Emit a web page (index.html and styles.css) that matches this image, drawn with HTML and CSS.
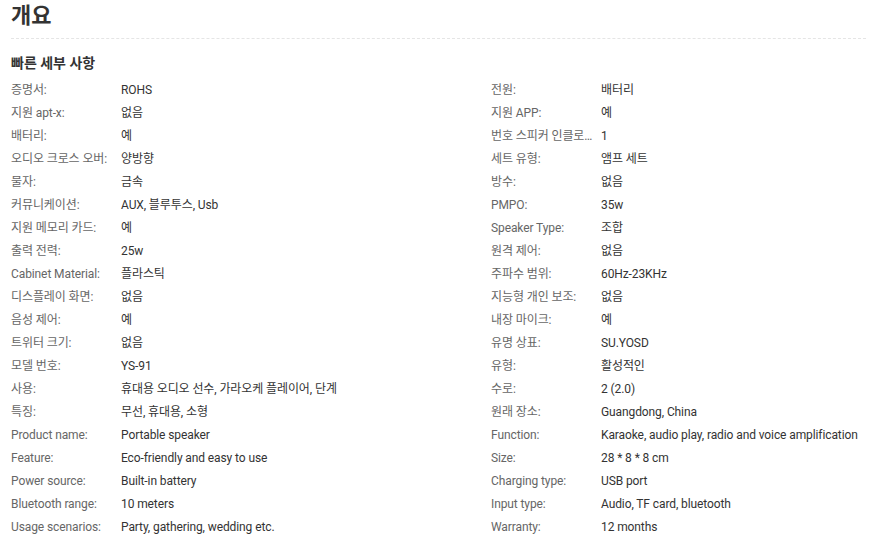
FILE: index.html
```html
<!DOCTYPE html>
<html lang="ko">
	<head>
		<meta charset="UTF-8">
		<title>개요</title>
		<link rel="stylesheet" href="styles.css">
	</head>
	<body>
		<div class="overview">
			<h1 class="overview-title">개요</h1>
			<h2 class="sub-title">빠른 세부 사항</h2>
			<div class="attr-list">
				<div class="attr"><span class="attr-name">증명서:</span><span class="attr-val">ROHS</span></div>
				<div class="attr"><span class="attr-name">전원:</span><span class="attr-val">배터리</span></div>
				<div class="attr"><span class="attr-name">지원 apt-x:</span><span class="attr-val">없음</span></div>
				<div class="attr"><span class="attr-name">지원 APP:</span><span class="attr-val">예</span></div>
				<div class="attr"><span class="attr-name">배터리:</span><span class="attr-val">예</span></div>
				<div class="attr"><span class="attr-name">번호 스피커 인클로저:</span><span class="attr-val">1</span></div>
				<div class="attr"><span class="attr-name">오디오 크로스 오버:</span><span class="attr-val">양방향</span></div>
				<div class="attr"><span class="attr-name">세트 유형:</span><span class="attr-val">앰프 세트</span></div>
				<div class="attr"><span class="attr-name">물자:</span><span class="attr-val">금속</span></div>
				<div class="attr"><span class="attr-name">방수:</span><span class="attr-val">없음</span></div>
				<div class="attr"><span class="attr-name">커뮤니케이션:</span><span class="attr-val">AUX, 블루투스, Usb</span></div>
				<div class="attr"><span class="attr-name">PMPO:</span><span class="attr-val">35w</span></div>
				<div class="attr"><span class="attr-name">지원 메모리 카드:</span><span class="attr-val">예</span></div>
				<div class="attr"><span class="attr-name">Speaker Type:</span><span class="attr-val">조합</span></div>
				<div class="attr"><span class="attr-name">출력 전력:</span><span class="attr-val">25w</span></div>
				<div class="attr"><span class="attr-name">원격 제어:</span><span class="attr-val">없음</span></div>
				<div class="attr"><span class="attr-name">Cabinet Material:</span><span class="attr-val">플라스틱</span></div>
				<div class="attr"><span class="attr-name">주파수 범위:</span><span class="attr-val">60Hz-23KHz</span></div>
				<div class="attr"><span class="attr-name">디스플레이 화면:</span><span class="attr-val">없음</span></div>
				<div class="attr"><span class="attr-name">지능형 개인 보조:</span><span class="attr-val">없음</span></div>
				<div class="attr"><span class="attr-name">음성 제어:</span><span class="attr-val">예</span></div>
				<div class="attr"><span class="attr-name">내장 마이크:</span><span class="attr-val">예</span></div>
				<div class="attr"><span class="attr-name">트위터 크기:</span><span class="attr-val">없음</span></div>
				<div class="attr"><span class="attr-name">유명 상표:</span><span class="attr-val">SU.YOSD</span></div>
				<div class="attr"><span class="attr-name">모델 번호:</span><span class="attr-val">YS-91</span></div>
				<div class="attr"><span class="attr-name">유형:</span><span class="attr-val">활성적인</span></div>
				<div class="attr"><span class="attr-name">사용:</span><span class="attr-val">휴대용 오디오 선수, 가라오케 플레이어, 단계</span></div>
				<div class="attr"><span class="attr-name">수로:</span><span class="attr-val">2 (2.0)</span></div>
				<div class="attr"><span class="attr-name">특징:</span><span class="attr-val">무선, 휴대용, 소형</span></div>
				<div class="attr"><span class="attr-name">원래 장소:</span><span class="attr-val">Guangdong, China</span></div>
				<div class="attr"><span class="attr-name">Product name:</span><span class="attr-val">Portable speaker</span></div>
				<div class="attr"><span class="attr-name">Function:</span><span class="attr-val">Karaoke, audio play, radio and voice amplification</span></div>
				<div class="attr"><span class="attr-name">Feature:</span><span class="attr-val">Eco-friendly and easy to use</span></div>
				<div class="attr"><span class="attr-name">Size:</span><span class="attr-val">28 * 8 * 8 cm</span></div>
				<div class="attr"><span class="attr-name">Power source:</span><span class="attr-val">Built-in battery</span></div>
				<div class="attr"><span class="attr-name">Charging type:</span><span class="attr-val">USB port</span></div>
				<div class="attr"><span class="attr-name">Bluetooth range:</span><span class="attr-val">10 meters</span></div>
				<div class="attr"><span class="attr-name">Input type:</span><span class="attr-val">Audio, TF card, bluetooth</span></div>
				<div class="attr"><span class="attr-name">Usage scenarios:</span><span class="attr-val">Party, gathering, wedding etc.</span></div>
				<div class="attr"><span class="attr-name">Warranty:</span><span class="attr-val">12 months</span></div>
			</div>
		</div>
	</body>
</html>
```

FILE: styles.css
```css
*{
	margin: 0;
	padding: 0;
	box-sizing: border-box;
}
body{
	font-family: Roboto, "Noto Sans CJK KR", sans-serif;
	color: #333;
	background: #fff;
}
.overview{
	padding: 0 3px 0 11px;
}
.overview-title{
	font-size: 22px;
	line-height: 32px;
	font-weight: bold;
	color: #333;
	padding-bottom: 6px;
	border-bottom: 1px dashed #e5e5e5;
}
.sub-title{
	font-size: 14px;
	line-height: 20px;
	font-weight: bold;
	color: #333;
	margin-top: 14px;
	margin-bottom: 6px;
}
.attr-list{
	display: grid;
	grid-template-columns: 480px 1fr;
}
.attr{
	display: flex;
	height: 23px;
	line-height: 23px;
	font-size: 12px;
	letter-spacing: -0.1px;
}
.attr-name{
	width: 110px;
	padding-right: 4px;
	flex-shrink: 0;
	color: #666;
	white-space: nowrap;
	overflow: hidden;
	text-overflow: ellipsis;
}
.attr-val{
	color: #333;
	white-space: nowrap;
}
```
